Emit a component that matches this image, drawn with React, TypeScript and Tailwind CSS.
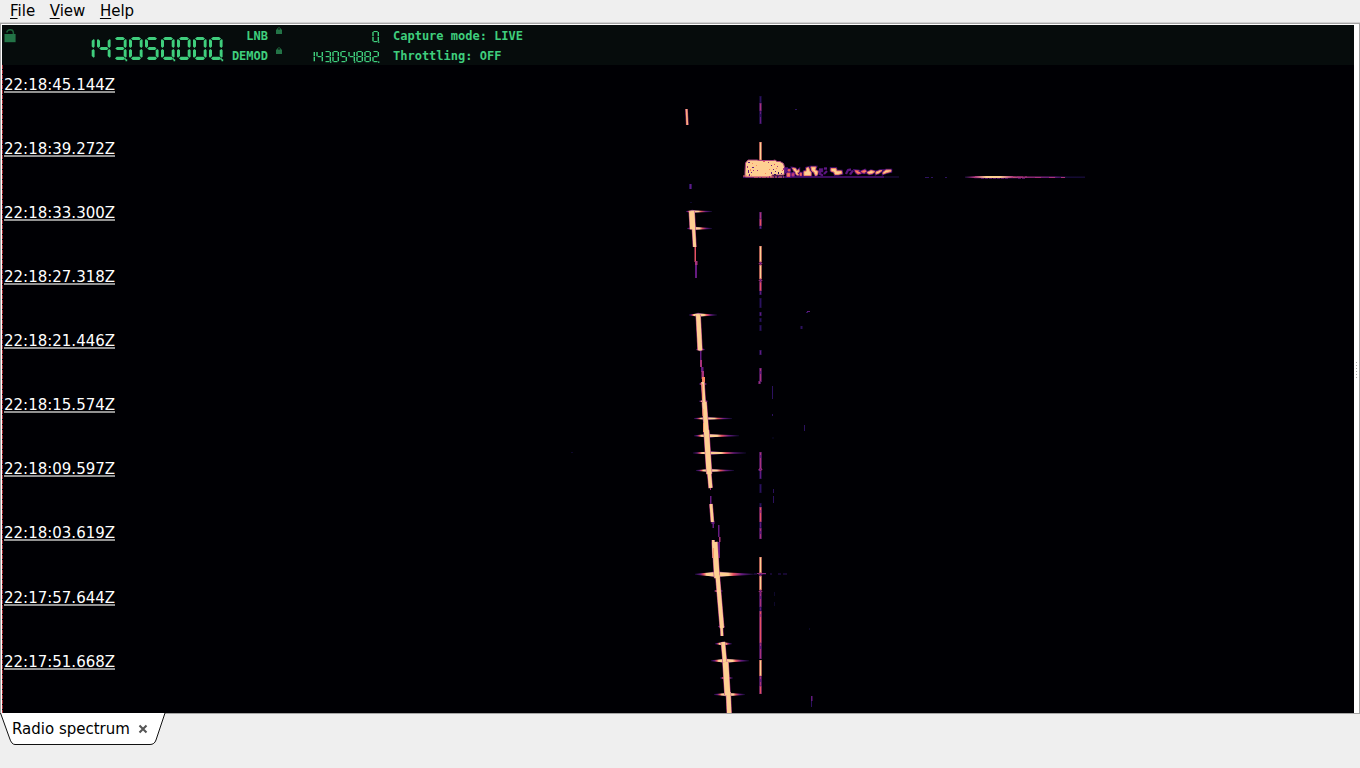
import React from "react";

const SEGMENTS: Record<string, string> = {
  "0": "abcdef", "1": "bc", "2": "abged", "3": "abgcd", "4": "fgbc",
  "5": "afgcd", "6": "afgecd", "7": "abc", "8": "abcdefg", "9": "abcdfg",
};

const LARGE: Record<string, string> = {
  a: "M4 0.1H10L12 1.6L10.6 3H3.6L2 1.6Z",
  b: "M12.9 2L13.6 3V9.5L12.4 10.9L10.7 9.4V3.8Z",
  c: "M12.4 11.9L13.6 13.2V19.8L12.7 20.8L10.7 18.9V13.3Z",
  d: "M3.6 19.8H10.6L12 21.3L10.4 22.9H3.8L2 21.4Z",
  e: "M1.4 11.9L3 13.3V18.9L1.1 20.8L0 19.8V13.2Z",
  f: "M1 2L3 3.8V9.5L1.4 10.9L0 9.5V3Z",
  g: "M4 9.9H10L11.5 11.4L10 12.9H4L2.2 11.4Z",
};

const SMALL: Record<string, string> = {
  a: "M1.5 0H5.7V1.1H1.5Z",
  b: "M5.6 0.9H7V5.2H5.6Z",
  c: "M5.6 6H7V10.2H5.6Z",
  d: "M1.5 10H5.5V11.2H1.5Z",
  e: "M0.3 6H1.7V10.2H0.3Z",
  f: "M0.3 0.9H1.7V5.2H0.3Z",
  g: "M1.7 5H5.5V6.2H1.7Z",
};

function Lcd({ value, small = false }: { value: string; small?: boolean }) {
  const pitch = small ? 8 : 16;
  const shapes = small ? SMALL : LARGE;
  const n = value.length;
  return (
    <svg width={n * pitch} height={small ? 13 : 25} className="block" fill="#3fce7d" aria-label={value}>
      {value.split("").map((d, i) => (
        <g key={i} transform={`translate(${i * pitch} 0)`}>
          {SEGMENTS[d].split("").map((s) => <path key={s} d={shapes[s]} />)}
          {(n - 1 - i) % 3 === 0 && (small ? <rect x="6" y="10.4" width="1.4" height="1.4" /> : <path d="M11.5 21H12.7V22.3H14.2V24.2H12.5V23H11.5Z" />)}
        </g>
      ))}
    </svg>
  );
}

function Lock({ open = false }: { open?: boolean }) {
  return open ? (
    <svg width="12" height="15" className="block">
      <path d="M2.7 3.5C3.5 0.2 8.9-.4 9.4 3.5V6" fill="none" stroke="#1c6038" strokeWidth="1.5" />
      <path d="M0.5 5H11.6V13.2H0.5Z" fill="#237447" />
    </svg>
  ) : (
    <svg width="6" height="7" className="block">
      <path d="M1.5 3V1.5Q3 -.2 4.5 1.5V3" fill="none" stroke="#1c6038" />
      <path d="M0 2.5H6V7H0Z" fill="#237447" />
    </svg>
  );
}

const C = ["#0d082b", "#2c115f", "#641a80", "#a8327d", "#e65164", "#fb8861", "#fecf92"];
const HALO = ["#0d082b", "#160b39", "#24104f", "#5c1c6c", "#8a2c6a", "#a8327d", "#d87566"];

// x, y, width, height, palette level
type Cell = [number, number, number, number, number];

const carrier: Cell[] = [
  [760, 96, 1, 7, 1], [760, 103, 1, 8, 3], [760, 111, 1, 13, 2],
  [760, 142, 1, 18, 6],
  [760, 212, 1, 7, 3], [760, 219, 1, 7, 4], [760, 226, 1, 3, 2],
  [760, 246, 1, 16, 6], [760, 265, 1, 14, 6], [760, 282, 1, 9, 4],
  [760, 291, 1, 4, 2], [760, 298, 1, 10, 1], [760, 312, 1, 4, 2], [760, 318, 1, 4, 1], [760, 325, 1, 6, 1],
  [760, 350, 1, 5, 2], [760, 368, 1, 14, 3], [759, 381, 1, 3, 3],
  [760, 452, 1, 17, 3], [759, 469, 1, 2, 2], [760, 471, 1, 8, 2], [760, 484, 1, 9, 1],
  [760, 503, 1, 4, 1], [760, 507, 1, 15, 4], [760, 522, 1, 6, 2], [760, 528, 1, 11, 3],
  [760, 557, 1, 16, 6], [760, 576, 1, 14, 6], [760, 593, 1, 14, 3], [760, 607, 1, 4, 2],
  [760, 611, 1, 32, 4], [760, 643, 1, 16, 3], [760, 660, 1, 16, 6], [760, 676, 1, 10, 3], [760, 686, 1, 8, 4],
];

const faint: Cell[] = [
  [795, 109, 2, 1, 1], [807, 311, 3, 1, 2], [806, 312, 2, 1, 1], [800.5, 326, 2, 3, 1],
  [772, 386, 1, 13, 1], [772, 414, 1, 2, 1], [772.5, 437, 1, 2, 0], [804, 425, 1, 6, 1],
  [773, 489, 1, 4, 1], [773, 496, 1, 7, 1], [774, 592, 1, 4, 0], [774, 602, 1, 4, 0],
  [809, 628, 1, 2, 0], [811, 696, 1.5, 5, 2], [811, 701, 1, 6, 1], [571, 452, 2, 1, 0],
  [689, 184, 3, 5, 1], [690, 184, 1, 5, 2], [690, 202, 2, 1, 0],
  [718, 525, 1.5, 12, 2], [719, 537, 1.5, 5, 3], [718, 542, 2, 16, 2],
  [694.5, 247, 1.5, 15, 4], [695, 261, 2.5, 4, 3], [695, 265, 2, 13, 2],
  [700, 350, 1.5, 10, 2], [700, 360, 2, 7, 3], [701, 367, 2.5, 5, 2], [701.5, 371, 2.5, 8, 3], [702, 377, 3, 6, 5],
  [710, 488, 1, 2, 3], [710, 496, 1.5, 8, 2], [711.5, 521, 3, 3, 2], [712.5, 524, 1.5, 4, 2],
];

// x at top, top, x at bottom, bottom, width
const track: Cell[] = [
  [686.5, 109, 687.3, 125, 1.7], [691.7, 211, 692.7, 229, 5.4], [693.6, 228, 694.7, 247, 3],
  [698.2, 315, 700, 350, 4.4], [702.8, 382, 704, 402, 3], [704.3, 402, 706.6, 434, 4.5],
  [706.4, 430, 709.2, 474, 5.2], [709, 470, 710.6, 488, 3.6], [711, 504, 712.4, 522, 2.8],
  [713.2, 540, 713.8, 558, 2.4], [714.8, 542, 717, 578, 5.2], [717.5, 575, 722, 628, 4], [721.5, 626, 722, 636, 2.4],
  [723, 642, 724.8, 662, 3.8], [725.5, 662, 727.5, 695, 5.6], [728.3, 692, 729.2, 713, 4.4],
];

// left, centre y, right, centre x, thickness
const flares: Cell[] = [
  [686, 211.5, 712, 692, 2], [687, 228.4, 712, 694, 2.8],
  [689, 315, 717, 698, 3], [696, 349.5, 705, 700, 2.4], [699, 384, 707, 703, 2], [699, 401.2, 708, 704, 2],
  [694, 418.4, 732, 706, 2], [694, 435.7, 739, 707, 3], [693, 453, 746, 709, 2.3], [696, 470.4, 734, 709, 2.5],
  [695, 574.3, 754, 716, 4.8], [714, 591, 723, 718, 1.8], [718, 626.5, 725, 722, 1.8],
  [715, 643.7, 732, 723, 3], [711, 660.8, 749, 725, 3.6], [720, 678, 733, 726, 2.2], [714, 694.6, 745, 728, 3],
];

const noise: Cell[] = [
  [748, 162, 2, 1, 2], [752, 163, 1, 1, 5], [747, 166, 1, 2, 3], [752, 167, 2, 1, 2], [750, 169, 1, 2, 5],
  [748, 170, 1, 3, 2], [753, 170, 1, 1, 3], [751, 172, 1, 1, 2], [749, 174, 1, 2, 2], [756, 165, 1, 1, 5],
  [757, 170, 1, 1, 3], [763, 161, 2, 1, 4], [768, 162, 1, 1, 3], [771, 165, 1, 1, 2], [774, 164, 1, 1, 4],
  [769, 169, 1, 1, 5], [773, 169, 1, 1, 2], [777, 166, 1, 1, 3], [771, 172, 1, 2, 2], [775, 171, 1, 1, 2],
  [778, 172, 1, 2, 1], [774, 174, 2, 1, 1], [778, 175, 1, 2, 2], [781, 173, 1, 1, 2], [782, 170, 1, 1, 4],
  [769, 176, 1, 1, 3], [765, 173, 1, 1, 5], [776, 168, 1, 1, 5], [783, 168, 1, 2, 3],
];

// filled echo fragments to the right of the main burst, with palette level
const fragments: [string, number][] = [
  ["M785.5 168.5H787L787.5 171L785.5 172Z", 3], ["M787 173H790V176.5H787Z", 5],
  ["M788 169.5H790V171H788Z", 5], ["M792.5 168L795.5 168.5L797 171L799 169.5V172L797 173L799 175H797L795 172.5Z", 6],
  ["M792 173.5L794 173V176H792Z", 4], ["M800 173H801.5V175.5H800Z", 5],
  ["M804 175.5V171.5L806.5 171V168L808.5 167.5L810 171.5L811 172V175.5Z", 6],
  ["M811 167H816L815 170L818 171.5L817 175L815.5 175.5L814 172L812 171Z", 6],
  ["M819 169.5H822V171H820V174L823 175.5M824 168.5H827M827 171L824 174", 3],
  ["M831 168.5H836L836.5 171H841.5L842 173.5L838 174.5H835L834 172L831 171Z", 6],
  ["M846 174L848 170L851 169.5M853 170.5L850 174.5", 3],
  ["M855 170.5L859 171L861 173L858 174L856 172.5Z", 5], ["M861 171.5L865 170L867 172L864 173Z", 5],
  ["M867 172.5L871 170.5L875 171.5L872 173.5L869 174Z", 6],
  ["M876 172L880 170.5H882L879 173L876 174Z", 6], ["M883 172.5L886 170H891V171.5L887 172.5L883 174Z", 6],
];

function Waterfall() {
  return (
    <svg width="1352" height="648" viewBox="2 65 1352 648" className="block bg-[#000004]">
      <defs>
        <linearGradient id="rise">
          <stop offset="0" stopColor="#160b39" /><stop offset=".25" stopColor="#641a80" />
          <stop offset=".42" stopColor="#e65164" /><stop offset=".55" stopColor="#fecf92" /><stop offset="1" stopColor="#fecf92" />
        </linearGradient>
        <linearGradient id="decay">
          <stop offset="0" stopColor="#fecf92" /><stop offset=".32" stopColor="#fecf92" />
          <stop offset=".46" stopColor="#e65164" /><stop offset=".68" stopColor="#641a80" /><stop offset="1" stopColor="#0d082b" />
        </linearGradient>
        <linearGradient id="echo">
          <stop offset="0" stopColor="#160b39" /><stop offset=".07" stopColor="#a8327d" />
          <stop offset=".11" stopColor="#fb8861" /><stop offset=".2" stopColor="#fecf92" />
          <stop offset=".32" stopColor="#fb8861" /><stop offset=".46" stopColor="#a8327d" />
          <stop offset=".75" stopColor="#641a80" /><stop offset=".85" stopColor="#160b39" /><stop offset="1" stopColor="#160b39" />
        </linearGradient>
        <linearGradient id="flash">
          <stop offset="0" stopColor="#a8327d" /><stop offset=".3" stopColor="#fecf92" />
          <stop offset=".65" stopColor="#fecf92" /><stop offset="1" stopColor="#a8327d" />
        </linearGradient>
      </defs>
      {carrier.map(([x, y, w, h, c], i) => (
        <g key={i}>
          <rect x={x - 0.8} y={y} width={w + 1.6} height={h} fill={HALO[c]} />
          <rect x={x} y={y + 0.5} width={w} height={h - 1} fill={C[c]} />
          {c < 6 && h > 9 && <rect x={x} y={y + 3} width={1} height={3} fill={C[Math.max(1, c - 1)]} />}
        </g>
      ))}
      {faint.map(([x, y, w, h, c], i) => <rect key={i} x={x} y={y} width={w} height={h} fill={C[c]} />)}
      {flares.map(([l, y, r, m, t], i) => (
        <g key={i}>
          <path d={`M${l + (m - l) * 0.3} ${y}L${m} ${y - t / 2 - 0.8}L${m + (r - m) * 0.6} ${y}L${m} ${y + t / 2 + 0.8}Z`} fill="#641a80" />
          <path d={`M${l} ${y - 0.5}L${m} ${y - t / 2}V${y + t / 2}L${l} ${y + 0.5}Z`} fill="url(#rise)" />
          <path d={`M${m} ${y - t / 2}L${r} ${y - 0.5}V${y + 0.5}L${m} ${y + t / 2}Z`} fill="url(#decay)" />
        </g>
      ))}
      {track.map(([x1, y1, x2, y2, w], i) => (
        <path key={i} d={`M${x1} ${y1}L${x2} ${y2}`} stroke="#a8327d" strokeWidth={w + 1} />
      ))}
      {track.map(([x1, y1, x2, y2, w], i) => (
        <path key={i} d={`M${x1} ${y1}L${x2} ${y2}`} stroke={i === 0 ? "#fcae79" : "#fecf92"} strokeWidth={w} />
      ))}
      <path d="M702.5 384V399M703 409V416M703.5 423V432M713.5 548V558" stroke="#fb9b6c" />
      {[263, 280, 574, 591, 469].map((y) => (
        <path key={y} d={`M760 ${y - 1}h1v1h1v1h-1v1h-1v-1h-1v-1h1z`} fill="#641a80" stroke="#a8327d" strokeWidth=".6" />
      ))}
      <path d="M754 574H787" stroke="#2c115f" strokeDasharray="3 2 7 4 2 6" />
      <path d="M757 573.5H766" stroke="#8b2a79" />

      <path d="M743 177H884" stroke="#51127c" strokeWidth="1.5" />
      <path d="M884 177H899" stroke="#240e4b" />
      <path d="M745 176.5V172L745.5 163L748 160H757L759 160.5H773L775 160L777 161.5H780L783.5 163.5L785 169L784 175H772V177H746Z" fill="#fecf92" stroke="#a8427d" strokeWidth="1" />
      <path d="M743 176H752M754 177H784" stroke="#e8756a" strokeDasharray="4 1 2 1" />
      {noise.map(([x, y, w, h, c], i) => <rect key={i} x={x} y={y} width={w} height={h} fill={C[c]} />)}
      {fragments.map(([d, c], i) => (
        <g key={i}>
          <path d={d} fill="none" stroke="#51127c" strokeWidth="2.4" />
          <path d={d} fill={c === 3 ? "none" : C[c]} stroke={c === 3 ? C[2] : C[c - 1]} strokeWidth=".9" />
        </g>
      ))}
      <path d="M925 177.5h4m2 0h2m12 0h2" stroke="#2c115f" />
      <path d="M969 177L980 176H1008L1020 177V178.3H975Z" fill="#641a80" />
      <rect x="965" y="176.5" width="120" height="1.4" fill="url(#echo)" />
      <rect x="975" y="176" width="38" height="2" fill="url(#flash)" />
      <path d="M981 178.5h28M1018 178.5h8" stroke="#511260" strokeDasharray="3 1" />
      <path d="M1017 177h10M1035 177.5h8m6 0h8m4 0h4" stroke="#a8327d" strokeDasharray="6 2" />
      <path d="M2.5 65V713" stroke="#a52d35" strokeDasharray="4 1" />
    </svg>
  );
}

const times: [string, string][] = [
  ["22:18:45.144Z", "h-16"], ["22:18:39.272Z", "h-16"], ["22:18:33.300Z", "h-16"],
  ["22:18:27.318Z", "h-16"], ["22:18:21.446Z", "h-16"], ["22:18:15.574Z", "h-16"],
  ["22:18:09.597Z", "h-16"], ["22:18:03.619Z", "h-[65px]"], ["22:17:57.644Z", "h-16"], ["22:17:51.668Z", "h-10"],
];

export default function App() {
  return (
    <div className="flex h-[768px] w-[1360px] flex-col overflow-hidden bg-[#efefef] font-['DejaVu_Sans',sans-serif] text-black">
      <nav className="flex h-[22px] shrink-0 gap-[14.6px] pl-[10px] text-[15px] leading-[23px]">
        {["File", "View", "Help"].map((m) => (
          <span key={m}><span className="underline decoration-1 underline-offset-2">{m[0]}</span>{m.slice(1)}</span>
        ))}
      </nav>
      <main className="h-[692px] shrink-0 border-t border-[#d2d2d2]">
        <div className="flex h-[691px] border border-[#a5a5a5] bg-white pt-px">
          <div className="ml-px w-[1352px] shrink-0">
            <header className="flex h-10 bg-[#060c0c] text-[#3fce7d]">
              <div className="w-[79px] pl-[2px] pt-[4px]"><Lock open /></div>
              <div className="w-[144px] pt-[12px]"><Lcd value="143050000" /></div>
              <div className="w-[43px] pt-px text-right font-['DejaVu_Sans_Mono',monospace] text-[12px] font-bold leading-5">
                <div>LNB</div><div>DEMOD</div>
              </div>
              <div className="flex w-[34px] flex-col gap-[13px] pl-2 pt-[2px]"><Lock /><Lock /></div>
              <div className="flex w-[77.5px] flex-col items-end gap-[7px] pt-[6px]">
                <Lcd value="0" small /><Lcd value="143054882" small />
              </div>
              <div className="ml-[13.5px] whitespace-pre pt-px font-['DejaVu_Sans_Mono',monospace] text-[12px] font-bold leading-5">
                <div>Capture mode: LIVE</div><div>Throttling: OFF</div>
              </div>
            </header>
            <div className="relative">
              <Waterfall />
              <div className="absolute left-[2px] top-[11px] text-[15px] leading-[18px] text-white">
                {times.map(([t, h]) => (
                  <div key={t} className={h}><span className="inline-block h-[17px] w-[111px] border-b-2 border-[#929292]">{t}</span></div>
                ))}
              </div>
            </div>
          </div>
          <div className="flex flex-1 flex-col items-center gap-[2px] pt-[337px]">
            {[0, 1, 2, 3, 4, 5].map((i) => <i key={i} className="size-px bg-[#aaa]" />)}
          </div>
        </div>
      </main>
      <footer className="relative h-[54px]">
        <svg width="168" height="32" className="absolute -top-px left-0">
          <path d="M0.5 0L9.5 25Q11.5 31.5 15 31.5H150Q154.5 31.5 156 27L165 0" fill="white" stroke="#111" />
        </svg>
        <div className="relative flex h-[30px] items-center pl-3 text-[15px] leading-[18px]">
          <span className="w-[126px]">Radio spectrum</span>
          <svg width="10" height="10"><path d="M1.5 1.5L8.5 8.5M8.5 1.5L1.5 8.5" stroke="#555" strokeWidth="2.1" /></svg>
        </div>
      </footer>
    </div>
  );
}
